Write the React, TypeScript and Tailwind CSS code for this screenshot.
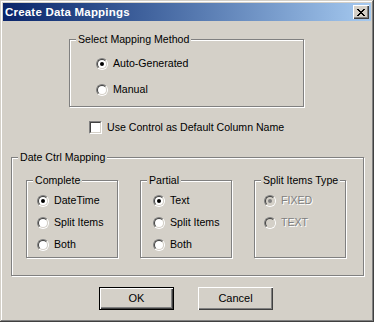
import type { ReactNode } from "react"

const font = "font-['Liberation_Sans',Arial,sans-serif] text-[10.6px] leading-[13px]"

function Radio({ label, checked, disabled }: { label: string; checked?: boolean; disabled?: boolean }) {
  return (
    <div className="flex items-center gap-[5px] h-[13px]">
      <div className="w-[12px] h-[12px] rounded-full border border-t-[#808080] border-l-[#808080] border-b-white border-r-white">
        <div
          className={`w-[10px] h-[10px] rounded-full border border-t-[#404040] border-l-[#404040] border-b-[#D4D0C8] border-r-[#D4D0C8] flex items-center justify-center ${
            disabled ? "bg-[#D4D0C8]" : "bg-white"
          }`}
        >
          {checked && <div className={`w-[4px] h-[4px] rounded-full ${disabled ? "bg-[#808080]" : "bg-black"}`} />}
        </div>
      </div>
      <span className={disabled ? "text-[#808080] [text-shadow:1px_1px_0_#fff]" : "text-black"}>{label}</span>
    </div>
  )
}

function Group({ label, className, children }: { label: string; className: string; children?: ReactNode }) {
  return (
    <div className={`relative border border-[#808080] shadow-[1px_1px_0_#fff,inset_1px_1px_0_#fff] ${className}`}>
      {/* caption sits over the top edge */}
      <span className="absolute -top-[7px] left-[6px] px-[2px] bg-[#D4D0C8] text-black">{label}</span>
      {children}
    </div>
  )
}

function Button({ label, isDefault }: { label: string; isDefault?: boolean }) {
  return (
    <div className={`w-[75px] h-[23px] ${isDefault ? "border border-black" : ""}`}>
      <div className="w-full h-full flex items-center justify-center bg-[#D4D0C8] text-black text-[11px] shadow-[inset_1px_1px_0_#fff,inset_-1px_-1px_0_#404040,inset_-2px_-2px_0_#808080,inset_2px_2px_0_#D4D0C8]">
        {label}
      </div>
    </div>
  )
}

export default function App() {
  return (
    <div
      className={`w-[374px] h-[322px] p-[3px] bg-[#D4D0C8] shadow-[inset_-1px_-1px_0_#404040,inset_1px_1px_0_#D4D0C8,inset_-2px_-2px_0_#808080,inset_2px_2px_0_#fff] ${font}`}
    >
      {/* Title bar */}
      <div className="h-[18px] flex items-center justify-between pl-[2px] pr-[2px] bg-gradient-to-r from-[#0A246A] to-[#A6CAF0]">
        <span className="text-white font-bold text-[11.5px] tracking-[0.2px]">Create Data Mappings</span>
        <div className="w-[16px] h-[14px] flex items-center justify-center bg-[#D4D0C8] shadow-[inset_1px_1px_0_#fff,inset_-1px_-1px_0_#404040,inset_-2px_-2px_0_#808080]">
          <svg width="8" height="7" viewBox="0 0 8 7" shapeRendering="crispEdges">
            <path d="M0 0h2v1H0zM6 0h2v1H6zM1 1h2v1H1zM5 1h2v1H5zM2 2h4v1H2zM3 3h2v1H3zM2 4h4v1H2zM1 5h2v1H1zM5 5h2v1H5zM0 6h2v1H0zM6 6h2v1H6z" fill="#000" />
          </svg>
        </div>
      </div>

      {/* Mapping method */}
      <Group label="Select Mapping Method" className="mt-[18px] ml-[66px] w-[235px] h-[68px]">
        <div className="flex flex-col gap-[13px] pt-[17px] pl-[26px]">
          <Radio label="Auto-Generated" checked />
          <Radio label="Manual" />
        </div>
      </Group>

      {/* Checkbox */}
      <div className="mt-[14px] ml-[86px] flex items-center gap-[5px] h-[13px]">
        <div className="w-[13px] h-[13px] border border-t-[#808080] border-l-[#808080] border-b-white border-r-white">
          <div className="w-full h-full bg-white border border-t-[#404040] border-l-[#404040] border-b-[#D4D0C8] border-r-[#D4D0C8]" />
        </div>
        <span className="text-black">Use Control as Default Column Name</span>
      </div>

      {/* Date ctrl mapping */}
      <Group label="Date Ctrl Mapping" className="mt-[23px] ml-[8px] w-[353px] h-[119px]">
        <div className="flex gap-[22px] pt-[22px] pl-[14px]">
          <Group label="Complete" className="w-[92px] h-[78px]">
            <div className="flex flex-col gap-[9px] pt-[13px] pl-[10px]">
              <Radio label="DateTime" checked />
              <Radio label="Split Items" />
              <Radio label="Both" />
            </div>
          </Group>
          <Group label="Partial" className="w-[92px] h-[78px]">
            <div className="flex flex-col gap-[9px] pt-[13px] pl-[12px]">
              <Radio label="Text" checked />
              <Radio label="Split Items" />
              <Radio label="Both" />
            </div>
          </Group>
          <Group label="Split Items Type" className="w-[92px] h-[78px]">
            <div className="flex flex-col gap-[9px] pt-[13px] pl-[9px]">
              <Radio label="FIXED" checked disabled />
              <Radio label="TEXT" disabled />
            </div>
          </Group>
        </div>
      </Group>

      {/* Buttons */}
      <div className="mt-[11px] ml-[96px] flex gap-[24px]">
        <Button label="OK" isDefault />
        <Button label="Cancel" />
      </div>
    </div>
  )
}
